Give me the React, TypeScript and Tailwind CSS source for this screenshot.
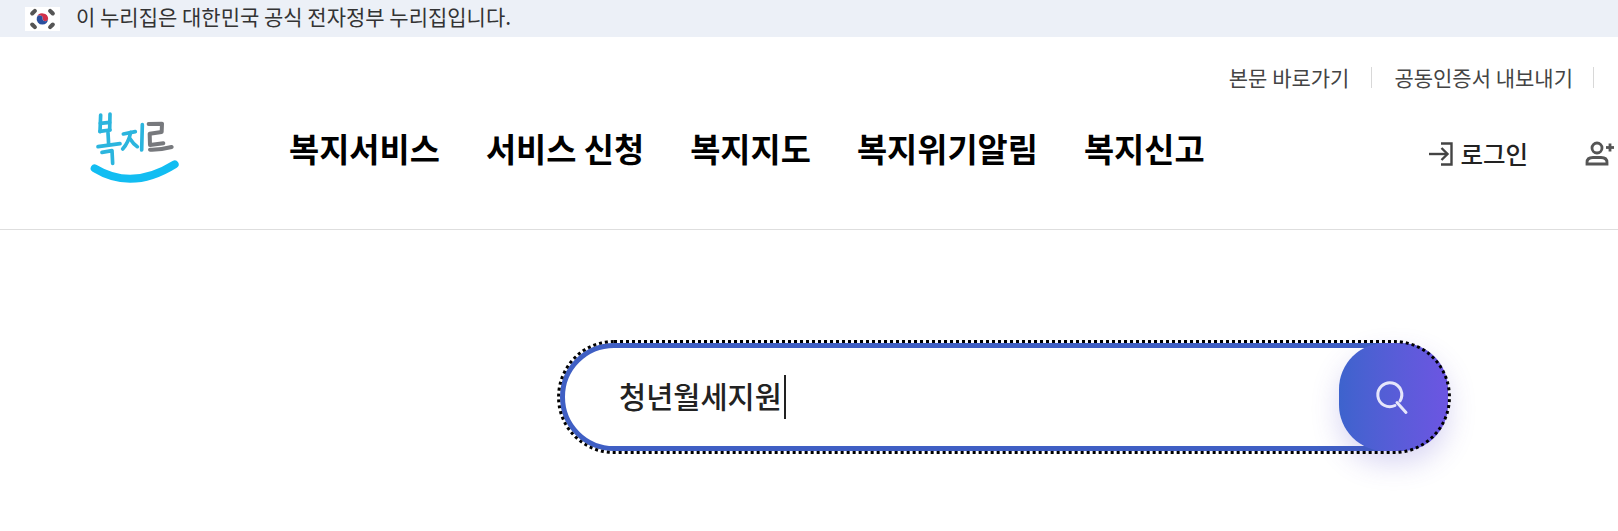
const font = "font-['Noto_Sans_CJK_KR','Noto_Sans',sans-serif]"

function Flag() {
  return (
    <svg width="35" height="24" viewBox="0 0 34 24" preserveAspectRatio="none" className="shrink-0">
      <rect width="34" height="24" fill="#fff" />
      <path d="M11.500 10.500a5.600 5.600 0 0 1 11 1.500a2.800 2.800 0 0 1-5.500 0a2.800 2.800 0 0 0-5.500-1.500z" fill="#d0304a" />
      <path d="M11.500 10.500a5.600 5.600 0 0 0 5.500 7.100a5.600 5.600 0 0 0 5.500-5.600a2.800 2.800 0 0 1-5.500 0a2.800 2.800 0 0 0-5.500-1.500z" fill="#2a4f9e" />
      <g stroke="#555" strokeWidth="4" strokeLinecap="round">
        <path d="M7 6.500l2.600-2.600" />
        <path d="M24.400 3.900l2.600 2.600" />
        <path d="M7 17.500l2.600 2.600" />
        <path d="M24.400 20.100l2.600-2.600" />
      </g>
    </svg>
  )
}

function Logo() {
  return (
    <svg width="130" height="110" viewBox="0 0 390 330" fill="none" strokeLinecap="round" strokeLinejoin="round">
      <g stroke="#2bb5de" strokeWidth="11">
        <path d="M92 75l-2 50" />
        <path d="M120 72l-1 48" />
        <path d="M91 100l28-3" />
        <path d="M90 124l30-4" />
        <path d="M114 128l2 36" />
        <path d="M84 170l66-9" />
        <path d="M96 187l30-5l2 38" />
        <path d="M160 132l36-7" />
        <path d="M182 127q-6 30-24 50" />
        <path d="M180 146q10 16 22 24" />
        <path d="M217 104l-2 76" />
      </g>
      <g stroke="#77797d" strokeWidth="12">
        <path d="M236 102l40-1l-1 25l-36 5l1 34l40-5" />
        <path d="M240 179q30 1 65-8" />
      </g>
      <path d="M74 235q112 68 240-12" stroke="#12bdf2" strokeWidth="24" />
    </svg>
  )
}

function LoginIcon() {
  return (
    <svg width="24" height="24" viewBox="0 0 24 24" fill="none" stroke="#444" strokeWidth="2.400">
      <path d="M0 12h18" />
      <path d="M12.500 6l6 6l-6 6" />
      <path d="M12 1.500h10.500v21h-10.500" />
    </svg>
  )
}

function UserPlusIcon() {
  return (
    <svg width="30" height="26" viewBox="0 0 30 26" fill="none" stroke="#555" strokeWidth="2.800">
      <circle cx="12" cy="7" r="5" />
      <path d="M2 23v-1.500q0-5 6-5h8q6 0 6 5v1.500z" />
      <path d="M21 6.500h8" />
      <path d="M25 2.500v8" />
    </svg>
  )
}

function SearchIcon() {
  return (
    <svg width="42" height="42" viewBox="0 0 42 42" fill="none" stroke="#e6e6fb" strokeWidth="3" strokeLinecap="round">
      <path d="M22 29.500a12 12 0 1 1 5-4.500" />
      <path d="M24 26.500l9 10" />
    </svg>
  )
}

export default function App() {
  return (
    <div className={`${font} w-[1618px] h-[531px] overflow-hidden bg-white`}>
      <div className="flex h-[37px] items-center gap-[16px] bg-[#ecf0f7] pl-[25px] text-[21px] text-[#333]">
        <Flag />
        <span className="-mt-[3px]">이 누리집은 대한민국 공식 전자정부 누리집입니다.</span>
      </div>

      <header className="h-[193px] border-b border-[#dedede]">
        <div className="flex items-center justify-end pt-[27px] pr-[24px] text-[21px] leading-[26px] text-[#444]">
          <a>본문 바로가기</a>
          <span className="mx-[22px] h-[21px] w-px bg-[#d8d8d8]" />
          <a>공동인증서 내보내기</a>
          <span className="ml-[20px] h-[21px] w-px bg-[#d8d8d8]" />
        </div>
        <div className="flex items-start">
          <div className="ml-[70px] w-[130px]">
            <Logo />
          </div>
          <nav className="ml-[89px] mt-[36px] flex gap-[46px] text-[32.800px] leading-[44px] font-bold text-black">
            <a>복지서비스</a>
            <a>서비스 신청</a>
            <a>복지지도</a>
            <a>복지위기알림</a>
            <a>복지신고</a>
          </nav>
          <div className="ml-auto mt-[47px] flex items-center pr-[3px] text-[24.500px] leading-[34px] font-medium text-[#222]">
            <LoginIcon />
            <span className="ml-[7px]">로그인</span>
            <span className="ml-[57px]">
              <UserPlusIcon />
            </span>
          </div>
        </div>
      </header>

      <div className="pt-[113px] pl-[560px]">
        <div className="flex h-[108px] w-[888px] items-center rounded-[54px] border-[5px] border-[#3f5fc4] bg-white outline-[3px] outline-dotted outline-black">
          <div className="flex flex-1 items-center pl-[54px] text-[29.500px] font-medium text-[#222]">
            <span className="-mt-[3px]">청년월세지원</span>
            <span className="ml-[2px] h-[44px] w-[2px] bg-[#222]" />
          </div>
          <button className="-my-[5px] -mr-[5px] flex h-[108px] w-[109px] items-center justify-center rounded-[46px] bg-gradient-to-r from-[#3d63cd] to-[#6c55e2] shadow-[0_12px_28px_rgba(80,70,200,0.22)]">
            <SearchIcon />
          </button>
        </div>
      </div>
    </div>
  )
}
